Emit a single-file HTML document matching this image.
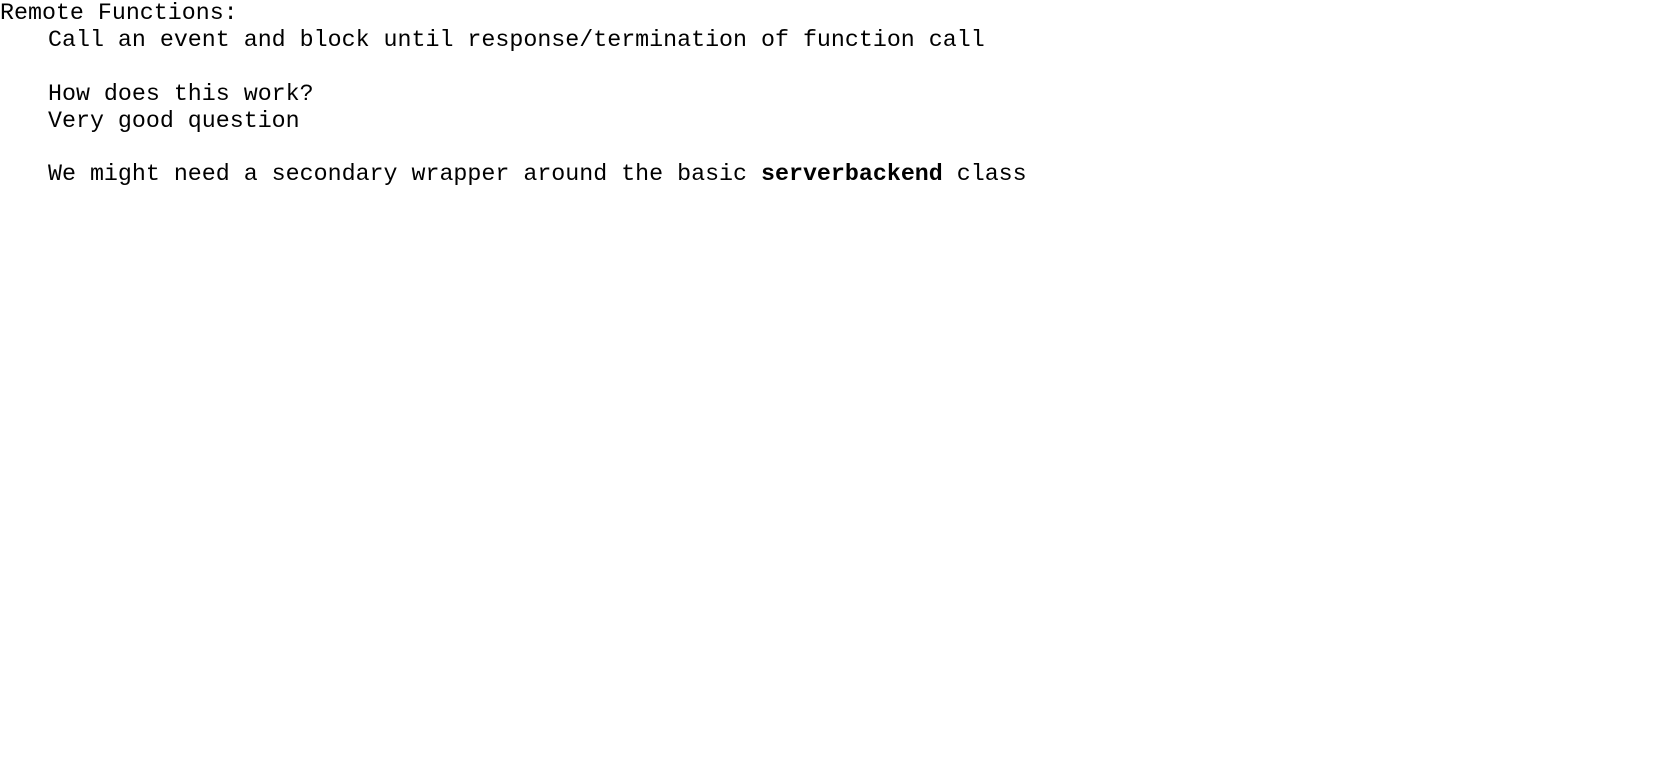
<!DOCTYPE html>
<html><head><style>
html,body{margin:0;padding:0;background:#fff;}
body{font-family:"Liberation Mono",monospace;font-size:23.3px;line-height:26.9px;color:#000;width:1674px;height:768px;overflow:hidden;}
.l{white-space:pre;height:26.9px;}
.i{padding-left:48px;}
</style></head><body>
<div class="l">Remote Functions:</div>
<div class="l i">Call an event and block until response/termination of function call</div>
<div class="l"></div>
<div class="l i">How does this work?</div>
<div class="l i">Very good question</div>
<div class="l"></div>
<div class="l i">We might need a secondary wrapper around the basic <b>serverbackend</b> class</div>
</body></html>
